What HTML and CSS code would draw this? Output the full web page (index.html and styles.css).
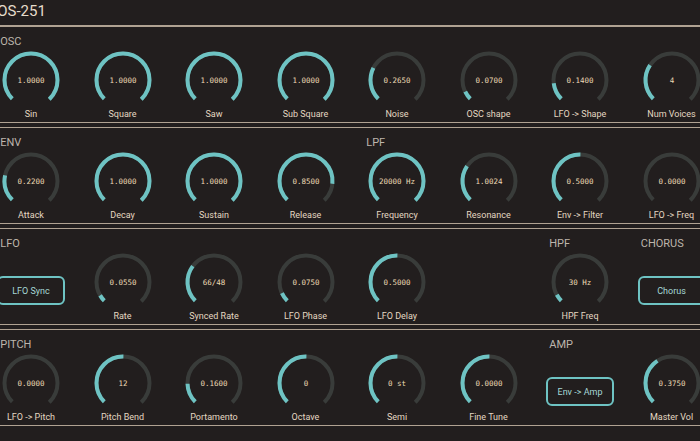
FILE: index.html
```html
<!DOCTYPE html>
<html lang="en">
<head>
<meta charset="utf-8">
<title>OS-251</title>
<link rel="stylesheet" href="styles.css">
</head>
<body>
<div class="synth">
  <div class="header">OS-251</div>

  <div class="section first">
    <div class="group">
      <div class="gtitle">OSC</div>
      <div class="cells">
        <div class="cell"><svg class="dial" viewBox="0 0 60 60"><circle class="track" cx="30" cy="30" r="26.5"/><circle class="val" cx="30" cy="30" r="26.5" stroke-dasharray="124.88 200"/><text x="30" y="30">1.0000</text></svg><div class="label">Sin</div></div>
        <div class="cell"><svg class="dial" viewBox="0 0 60 60"><circle class="track" cx="30" cy="30" r="26.5"/><circle class="val" cx="30" cy="30" r="26.5" stroke-dasharray="124.88 200"/><text x="30" y="30">1.0000</text></svg><div class="label">Square</div></div>
        <div class="cell"><svg class="dial" viewBox="0 0 60 60"><circle class="track" cx="30" cy="30" r="26.5"/><circle class="val" cx="30" cy="30" r="26.5" stroke-dasharray="124.88 200"/><text x="30" y="30">1.0000</text></svg><div class="label">Saw</div></div>
        <div class="cell"><svg class="dial" viewBox="0 0 60 60"><circle class="track" cx="30" cy="30" r="26.5"/><circle class="val" cx="30" cy="30" r="26.5" stroke-dasharray="124.88 200"/><text x="30" y="30">1.0000</text></svg><div class="label">Sub Square</div></div>
        <div class="cell"><svg class="dial" viewBox="0 0 60 60"><circle class="track" cx="30" cy="30" r="26.5"/><circle class="val" cx="30" cy="30" r="26.5" stroke-dasharray="33.09 200"/><text x="30" y="30">0.2650</text></svg><div class="label">Noise</div></div>
        <div class="cell"><svg class="dial" viewBox="0 0 60 60"><circle class="track" cx="30" cy="30" r="26.5"/><circle class="val" cx="30" cy="30" r="26.5" stroke-dasharray="8.74 200"/><text x="30" y="30">0.0700</text></svg><div class="label">OSC shape</div></div>
        <div class="cell"><svg class="dial" viewBox="0 0 60 60"><circle class="track" cx="30" cy="30" r="26.5"/><circle class="val" cx="30" cy="30" r="26.5" stroke-dasharray="17.48 200"/><text x="30" y="30">0.1400</text></svg><div class="label">LFO -&gt; Shape</div></div>
        <div class="cell"><svg class="dial" viewBox="0 0 60 60"><circle class="track" cx="30" cy="30" r="26.5"/><circle class="val" cx="30" cy="30" r="26.5" stroke-dasharray="36.2 200"/><text x="30" y="30">4</text></svg><div class="label">Num Voices</div></div>
      </div>
    </div>
  </div>

  <div class="section">
    <div class="group">
      <div class="gtitle">ENV</div>
      <div class="cells">
        <div class="cell"><svg class="dial" viewBox="0 0 60 60"><circle class="track" cx="30" cy="30" r="26.5"/><circle class="val" cx="30" cy="30" r="26.5" stroke-dasharray="26.2 200"/><text x="30" y="30">0.2200</text></svg><div class="label">Attack</div></div>
        <div class="cell"><svg class="dial" viewBox="0 0 60 60"><circle class="track" cx="30" cy="30" r="26.5"/><circle class="val" cx="30" cy="30" r="26.5" stroke-dasharray="124.88 200"/><text x="30" y="30">1.0000</text></svg><div class="label">Decay</div></div>
        <div class="cell"><svg class="dial" viewBox="0 0 60 60"><circle class="track" cx="30" cy="30" r="26.5"/><circle class="val" cx="30" cy="30" r="26.5" stroke-dasharray="124.88 200"/><text x="30" y="30">1.0000</text></svg><div class="label">Sustain</div></div>
        <div class="cell"><svg class="dial" viewBox="0 0 60 60"><circle class="track" cx="30" cy="30" r="26.5"/><circle class="val" cx="30" cy="30" r="26.5" stroke-dasharray="106.1 200"/><text x="30" y="30">0.8500</text></svg><div class="label">Release</div></div>
      </div>
    </div>
    <div class="group">
      <div class="gtitle">LPF</div>
      <div class="cells">
        <div class="cell"><svg class="dial" viewBox="0 0 60 60"><circle class="track" cx="30" cy="30" r="26.5"/><circle class="val" cx="30" cy="30" r="26.5" stroke-dasharray="124.88 200"/><text x="30" y="30">20000 Hz</text></svg><div class="label">Frequency</div></div>
        <div class="cell"><svg class="dial" viewBox="0 0 60 60"><circle class="track" cx="30" cy="30" r="26.5"/><circle class="val" cx="30" cy="30" r="26.5" stroke-dasharray="36.2 200"/><text x="30" y="30">1.0024</text></svg><div class="label">Resonance</div></div>
        <div class="cell"><svg class="dial" viewBox="0 0 60 60"><circle class="track" cx="30" cy="30" r="26.5"/><circle class="val" cx="30" cy="30" r="26.5" stroke-dasharray="62.44 200"/><text x="30" y="30">0.5000</text></svg><div class="label">Env -&gt; Filter</div></div>
        <div class="cell"><svg class="dial" viewBox="0 0 60 60"><circle class="track" cx="30" cy="30" r="26.5"/><text x="30" y="30">0.0000</text></svg><div class="label">LFO -&gt; Freq</div></div>
      </div>
    </div>
  </div>

  <div class="section">
    <div class="group">
      <div class="gtitle">LFO</div>
      <div class="cells">
        <div class="cell"><div class="btn">LFO Sync</div></div>
        <div class="cell"><svg class="dial" viewBox="0 0 60 60"><circle class="track" cx="30" cy="30" r="26.5"/><circle class="val" cx="30" cy="30" r="26.5" stroke-dasharray="6.87 200"/><text x="30" y="30">0.0550</text></svg><div class="label">Rate</div></div>
        <div class="cell"><svg class="dial" viewBox="0 0 60 60"><circle class="track" cx="30" cy="30" r="26.5"/><circle class="val" cx="30" cy="30" r="26.5" stroke-dasharray="37.5 200"/><text x="30" y="30">66/48</text></svg><div class="label">Synced Rate</div></div>
        <div class="cell"><svg class="dial" viewBox="0 0 60 60"><circle class="track" cx="30" cy="30" r="26.5"/><circle class="val" cx="30" cy="30" r="26.5" stroke-dasharray="9.37 200"/><text x="30" y="30">0.0750</text></svg><div class="label">LFO Phase</div></div>
        <div class="cell"><svg class="dial" viewBox="0 0 60 60"><circle class="track" cx="30" cy="30" r="26.5"/><circle class="val" cx="30" cy="30" r="26.5" stroke-dasharray="62.44 200"/><text x="30" y="30">0.5000</text></svg><div class="label">LFO Delay</div></div>
        <div class="cell"></div>
      </div>
    </div>
    <div class="group">
      <div class="gtitle">HPF</div>
      <div class="cells">
        <div class="cell"><svg class="dial" viewBox="0 0 60 60"><circle class="track" cx="30" cy="30" r="26.5"/><circle class="val" cx="30" cy="30" r="26.5" stroke-dasharray="7.5 200"/><text x="30" y="30">30 Hz</text></svg><div class="label">HPF Freq</div></div>
      </div>
    </div>
    <div class="group">
      <div class="gtitle">CHORUS</div>
      <div class="cells">
        <div class="cell"><div class="btn">Chorus</div></div>
      </div>
    </div>
  </div>

  <div class="section">
    <div class="group">
      <div class="gtitle">PITCH</div>
      <div class="cells">
        <div class="cell"><svg class="dial" viewBox="0 0 60 60"><circle class="track" cx="30" cy="30" r="26.5"/><text x="30" y="30">0.0000</text></svg><div class="label">LFO -&gt; Pitch</div></div>
        <div class="cell"><svg class="dial" viewBox="0 0 60 60"><circle class="track" cx="30" cy="30" r="26.5"/><circle class="val" cx="30" cy="30" r="26.5" stroke-dasharray="62.44 200"/><text x="30" y="30">12</text></svg><div class="label">Pitch Bend</div></div>
        <div class="cell"><svg class="dial" viewBox="0 0 60 60"><circle class="track" cx="30" cy="30" r="26.5"/><circle class="val" cx="30" cy="30" r="26.5" stroke-dasharray="20 200"/><text x="30" y="30">0.1600</text></svg><div class="label">Portamento</div></div>
        <div class="cell"><svg class="dial" viewBox="0 0 60 60"><circle class="track" cx="30" cy="30" r="26.5"/><circle class="val" cx="30" cy="30" r="26.5" stroke-dasharray="62.44 200"/><text x="30" y="30">0</text></svg><div class="label">Octave</div></div>
        <div class="cell"><svg class="dial" viewBox="0 0 60 60"><circle class="track" cx="30" cy="30" r="26.5"/><circle class="val" cx="30" cy="30" r="26.5" stroke-dasharray="62.44 200"/><text x="30" y="30">0 st</text></svg><div class="label">Semi</div></div>
        <div class="cell"><svg class="dial" viewBox="0 0 60 60"><circle class="track" cx="30" cy="30" r="26.5"/><circle class="val" cx="30" cy="30" r="26.5" stroke-dasharray="62.44 200"/><text x="30" y="30">0.0000</text></svg><div class="label">Fine Tune</div></div>
      </div>
    </div>
    <div class="group">
      <div class="gtitle">AMP</div>
      <div class="cells">
        <div class="cell"><div class="btn">Env -&gt; Amp</div></div>
        <div class="cell"><svg class="dial" viewBox="0 0 60 60"><circle class="track" cx="30" cy="30" r="26.5"/><circle class="val" cx="30" cy="30" r="26.5" stroke-dasharray="46.83 200"/><text x="30" y="30">0.3750</text></svg><div class="label">Master Vol</div></div>
      </div>
    </div>
  </div>
</div>
</body>
</html>
```

FILE: styles.css
```css
html, body {
  margin: 0;
  padding: 0;
  background: #221e1e;
  overflow: hidden;
}

.synth {
  width: 732px;
  margin-left: -14.75px;
  font-family: Roboto, "Liberation Sans", sans-serif;
}

.header {
  height: 25px;
  padding-left: 12px;
  font-size: 15px;
  line-height: 23px;
  color: #e6dccb;
}

.section {
  box-sizing: border-box;
  height: 97px;
  border-top: 1px solid #b0a292;
  border-bottom: 1px solid #b0a292;
  margin-bottom: 4px;
  display: flex;
}

.section.first {
  height: 98px;
  border-top-width: 2px;
}

.group {
  display: flex;
  flex-direction: column;
}

.gtitle {
  margin-top: 8px;
  height: 14px;
  line-height: 14px;
  padding-left: 15px;
  font-size: 11px;
  color: #bdb5ac;
}

.cells {
  display: flex;
  margin-top: 1px;
}

.cell {
  width: 91.5px;
  display: flex;
  flex-direction: column;
  align-items: center;
}

.dial {
  display: block;
  width: 60px;
  height: 60px;
}

.dial circle {
  fill: none;
  stroke-width: 4;
  transform: rotate(135deg);
  transform-origin: 30px 30px;
}

.dial .track {
  stroke: #393c3a;
  stroke-dasharray: 124.88 200;
}

.dial .val {
  stroke: #6ec3c3;
}

.dial text {
  font-family: "DejaVu Sans Mono", "Liberation Mono", monospace;
  font-size: 7.5px;
  fill: #ecdab4;
  text-anchor: middle;
  dominant-baseline: central;
}

.label {
  margin-top: -1px;
  line-height: 11px;
  font-size: 9px;
  color: #e4d8c2;
  white-space: nowrap;
}

.btn {
  margin-top: 24px;
  box-sizing: border-box;
  width: 68px;
  height: 29px;
  border: 2.5px solid #6ec3c3;
  border-radius: 6px;
  display: flex;
  align-items: center;
  justify-content: center;
  font-size: 9px;
  color: #a6d8d6;
}
```
